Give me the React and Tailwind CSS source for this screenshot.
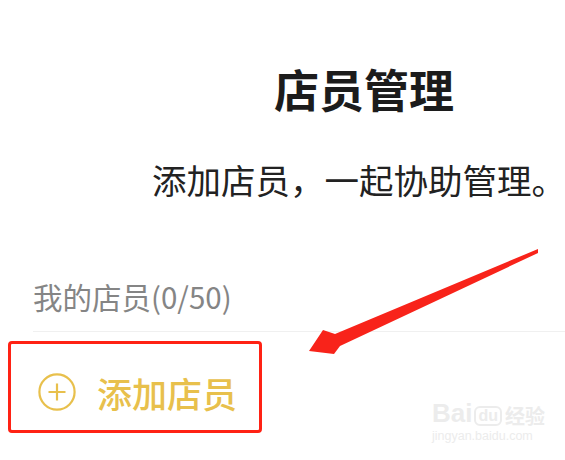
export default function App() {
    return (
        <div className="relative h-[460px] w-[565px] overflow-hidden bg-white pt-[66px] font-['Noto_Sans_CJK_SC','Noto_Sans',sans-serif]">
            {/* header */}
            <h1 className="pl-[274px] text-[45px] font-bold leading-none text-[#1c1c1c]">店员管理</h1>
            <p className="mt-[51px] whitespace-nowrap pl-[152px] text-[34.5px] leading-none text-[#222]">
                添加店员，一起协助管理。
            </p>

            {/* list */}
            <div className="mt-[85px] pl-[33px] text-[29.5px] leading-none text-[#858585]">我的店员(0/50)</div>
            <div className="ml-[33px] mt-[20px] h-px bg-[#f0f0f0]" />

            <div className="ml-[8px] mt-[9px] flex h-[92px] w-[254px] items-center gap-[21px] rounded-[4px] border-[3px] border-[#ff2214] pl-[27px] pt-[10px]">
                <svg viewBox="0 0 38 38" className="h-[38px] w-[38px] shrink-0" fill="none" stroke="#e8c04c" strokeWidth="2.2">
                    <circle cx="19" cy="19" r="17.6" />
                    <path d="M19 10.5v17M10.5 19h17" />
                </svg>
                <span className="text-[35px] font-medium leading-none text-[#e8c04c]">添加店员</span>
            </div>

            {/* annotation arrow */}
            <svg className="pointer-events-none absolute left-0 top-0" width="565" height="460" viewBox="0 0 565 460">
                <polygon
                    points="538,249 335,334 323,330 309,351 334,354 340,346 538,253"
                    fill="#f8231a"
                />
            </svg>

            {/* watermark */}
            <div className="pointer-events-none absolute left-[432px] top-[400px] flex flex-col items-start text-[#ececec]">
                <div className="flex items-end font-['Liberation_Sans',sans-serif] text-[26px] font-bold leading-none">
                    <span>Bai</span>
                    <span className="ml-[2px] rounded-[6px] border-2 border-[#ececec] px-[2px] text-[16px]">du</span>
                    <span className="ml-[3px] font-['Noto_Sans_CJK_SC',sans-serif] text-[20px]">经验</span>
                </div>
                <div className="mt-[4px] font-['Liberation_Sans',sans-serif] text-[12.5px] leading-none">jingyan.baidu.com</div>
            </div>
        </div>
    );
}
